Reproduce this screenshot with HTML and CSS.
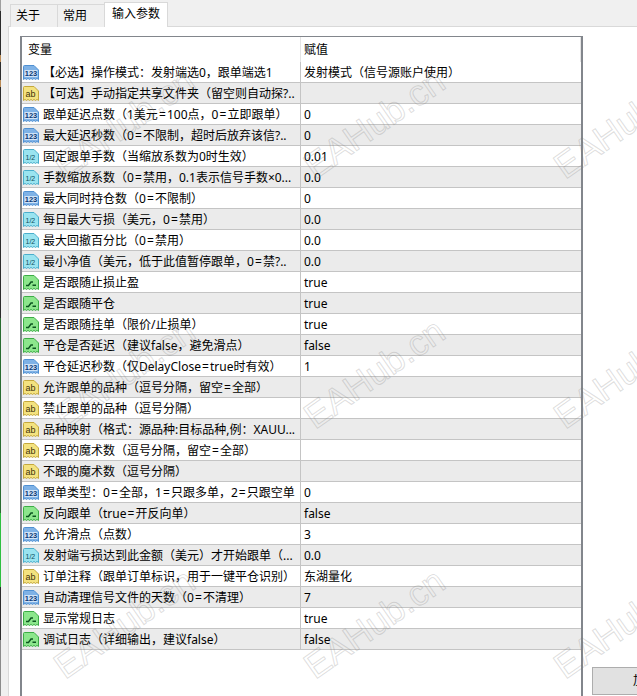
FILE: index.html
```html
<!DOCTYPE html>
<html lang="zh">
<head>
<meta charset="utf-8">
<title>输入参数</title>
<link rel="stylesheet" href="styles.css">
</head>
<body>
<svg class="defs" width="0" height="0" aria-hidden="true">
  <defs>
    <path id="page" d="M.5 1.5Q.5.5 1.5.5H11L15.5 5V14.5L14 13.4 12.5 14.5 11 13.4 9.5 14.5 8 13.4 6.5 14.5 5 13.4 3.5 14.5 2 13.4.5 14.5Z"/>
    <symbol id="i-int" viewBox="0 0 16 16"><use href="#page" fill="#7fb2e6" stroke="#4f90d2"/><path d="M1.5 5H14.5V12H1.5Z" fill="#cfe3f7"/><text x="8" y="11.2" class="ic-t ic-int">123</text></symbol>
    <symbol id="i-str" viewBox="0 0 16 16"><use href="#page" fill="#f4e27f" stroke="#c4a83c"/><text x="7.6" y="11.4" class="ic-t ic-str">ab</text></symbol>
    <symbol id="i-dbl" viewBox="0 0 16 16"><use href="#page" fill="#9ae4f0" stroke="#4aaecc"/><text x="7.4" y="11.2" class="ic-t ic-dbl">1/2</text></symbol>
    <symbol id="i-bool" viewBox="0 0 16 16"><use href="#page" fill="#8ce68c" stroke="#3cac46"/><path d="M3 10.5H5.5L8 7H10M9.5 10.2H13" fill="none" stroke="#0c5520" stroke-width="1.4"/></symbol>
  </defs>
</svg>
<div class="window">
  <div class="edge"></div>
  <div class="main">
    <nav class="tabs">
      <span class="tab">关于</span>
      <span class="tab">常用</span>
      <span class="tab active">输入参数</span>
    </nav>
    <section class="panel">
      <div class="frame">
        <table class="grid">
          <colgroup><col class="c-name"><col class="c-val"></colgroup>
          <thead><tr><th>变量</th><th>赋值</th></tr></thead>
          <tbody>
            <tr><td><svg class="ic"><use href="#i-int"/></svg>【必选】操作模式：发射端选0，跟单端选1</td><td>发射模式（信号源账户使用）</td></tr>
            <tr><td><svg class="ic"><use href="#i-str"/></svg>【可选】手动指定共享文件夹（留空则自动探?..</td><td></td></tr>
            <tr><td><svg class="ic"><use href="#i-int"/></svg>跟单延迟点数（1美元<span class="eq">=</span>100点，0<span class="eq">=</span>立即跟单）</td><td>0</td></tr>
            <tr><td><svg class="ic"><use href="#i-int"/></svg>最大延迟秒数（0<span class="eq">=</span>不限制，超时后放弃该信?..</td><td>0</td></tr>
            <tr><td><svg class="ic"><use href="#i-dbl"/></svg>固定跟单手数（当缩放系数为0时生效）</td><td>0.01</td></tr>
            <tr><td><svg class="ic"><use href="#i-dbl"/></svg>手数缩放系数（0<span class="eq">=</span>禁用，0.1表示信号手数×0...</td><td>0.0</td></tr>
            <tr><td><svg class="ic"><use href="#i-int"/></svg>最大同时持仓数（0<span class="eq">=</span>不限制）</td><td>0</td></tr>
            <tr><td><svg class="ic"><use href="#i-dbl"/></svg>每日最大亏损（美元，0<span class="eq">=</span>禁用）</td><td>0.0</td></tr>
            <tr><td><svg class="ic"><use href="#i-dbl"/></svg>最大回撤百分比（0<span class="eq">=</span>禁用）</td><td>0.0</td></tr>
            <tr><td><svg class="ic"><use href="#i-dbl"/></svg>最小净值（美元，低于此值暂停跟单，0<span class="eq">=</span>禁?..</td><td>0.0</td></tr>
            <tr><td><svg class="ic"><use href="#i-bool"/></svg>是否跟随止损止盈</td><td>true</td></tr>
            <tr><td><svg class="ic"><use href="#i-bool"/></svg>是否跟随平仓</td><td>true</td></tr>
            <tr><td><svg class="ic"><use href="#i-bool"/></svg>是否跟随挂单（限价/止损单）</td><td>true</td></tr>
            <tr><td><svg class="ic"><use href="#i-bool"/></svg>平仓是否延迟（建议false，避免滑点）</td><td>false</td></tr>
            <tr><td><svg class="ic"><use href="#i-int"/></svg>平仓延迟秒数（仅DelayClose<span class="eq">=</span>true时有效）</td><td>1</td></tr>
            <tr><td><svg class="ic"><use href="#i-str"/></svg>允许跟单的品种（逗号分隔，留空<span class="eq">=</span>全部）</td><td></td></tr>
            <tr><td><svg class="ic"><use href="#i-str"/></svg>禁止跟单的品种（逗号分隔）</td><td></td></tr>
            <tr><td><svg class="ic"><use href="#i-str"/></svg>品种映射（格式：源品种:目标品种,例：XAUU...</td><td></td></tr>
            <tr><td><svg class="ic"><use href="#i-str"/></svg>只跟的魔术数（逗号分隔，留空<span class="eq">=</span>全部）</td><td></td></tr>
            <tr><td><svg class="ic"><use href="#i-str"/></svg>不跟的魔术数（逗号分隔）</td><td></td></tr>
            <tr><td><svg class="ic"><use href="#i-int"/></svg>跟单类型：0<span class="eq">=</span>全部，1<span class="eq">=</span>只跟多单，2<span class="eq">=</span>只跟空单</td><td>0</td></tr>
            <tr><td><svg class="ic"><use href="#i-bool"/></svg>反向跟单（true<span class="eq">=</span>开反向单）</td><td>false</td></tr>
            <tr><td><svg class="ic"><use href="#i-int"/></svg>允许滑点（点数）</td><td>3</td></tr>
            <tr><td><svg class="ic"><use href="#i-dbl"/></svg>发射端亏损达到此金额（美元）才开始跟单（...</td><td>0.0</td></tr>
            <tr><td><svg class="ic"><use href="#i-str"/></svg>订单注释（跟单订单标识，用于一键平仓识别）</td><td>东湖量化</td></tr>
            <tr><td><svg class="ic"><use href="#i-int"/></svg>自动清理信号文件的天数（0<span class="eq">=</span>不清理）</td><td>7</td></tr>
            <tr><td><svg class="ic"><use href="#i-bool"/></svg>显示常规日志</td><td>true</td></tr>
            <tr><td><svg class="ic"><use href="#i-bool"/></svg>调试日志（详细输出，建议false）</td><td>false</td></tr>
          </tbody>
        </table>
      </div>
      <div class="side"><button class="btn" type="button">加载</button></div>
    </section>
  </div>
</div>
<div class="marks" aria-hidden="true">
  <span class="mark">EAHub.cn</span><span class="mark">EAHub.cn</span><span class="mark">EAHub.cn</span>
  <span class="mark">EAHub.cn</span><span class="mark">EAHub.cn</span><span class="mark">EAHub.cn</span>
  <span class="mark">EAHub.cn</span><span class="mark">EAHub.cn</span><span class="mark">EAHub.cn</span>
</div>
</body>
</html>
```
FILE: styles.css
```css
* { box-sizing: border-box; }
html, body { margin: 0; height: 100%; overflow: hidden; }
body {
  background: #f0f0f0;
  color: #000;
  font: 12px/1 "Noto Sans", "Noto Sans CJK SC", sans-serif;
  position: relative;
}
.defs { position: absolute; }
.window { display: flex; height: 696px; }
.edge {
  width: 1px;
  flex: none;
  background: linear-gradient(#a0a0a0 0 11px, #2c2c2c 11px 55px, #b98a55 55px 62px, #2c2c2c 62px 80px, #b98a55 80px 87px, #2c2c2c 87px 318px, #2a6d30 318px 513px, #2fc040 513px 587px, #2c2c2c 587px 640px, #8c8c8c 640px);
}
.main { flex: 1; min-width: 0; display: flex; flex-direction: column; padding-left: 7px; }
.tabs { height: 27px; display: flex; align-items: flex-end; padding-left: 2px; border-bottom: 1px solid #d9d9d9; flex: none; }
.tab {
  height: 23px;
  width: 48px;
  margin: 0 -1px -1px 0;
  padding: 5px 0 0 5px;
  background: #f0f0f0;
  border: 1px solid #d9d9d9;
  border-bottom: 0;
}
.tab.active {
  position: relative;
  height: 25px;
  width: 64px;
  background: #fff;
  padding: 5px 0 0 7px;
}
.panel { flex: 1; min-height: 0; display: flex; background: #fff; border-left: 1px solid #d9d9d9; padding: 9px 0 0 11px; }
.frame { width: 563px; flex: none; border: solid #82868c; border-width: 1px 2px 0; background: #fff; }
.grid { width: 559px; border-collapse: separate; border-spacing: 0; table-layout: fixed; }
.c-name { width: 279px; }
.c-val { width: 280px; }
th, td { padding: 0; text-align: left; font-weight: 400; white-space: nowrap; overflow: hidden; }
th { height: 25px; padding-left: 6px; border-right: 1px solid #e4e4e4; }
th + th { padding-left: 3px; }
td { height: 21px; padding-top: 1px; line-height: 19px; vertical-align: top; border-bottom: 1px solid #c4c4c4; }
td:first-child { border-right: 1px solid #c4c4c4; }
td + td { padding-left: 3px; }
tbody tr:nth-child(even) td { background: #ebebeb; }
.eq { padding: 0 1.1px; }
.ic { width: 16px; height: 16px; margin: 2px 4px 0 1px; vertical-align: top; }
.ic-t { font: 700 7.5px "Liberation Sans", sans-serif; text-anchor: middle; }
.ic-int { fill: #0c3874; }
.ic-str { font-size: 9px; font-weight: 400; fill: #3f3308; }
.ic-dbl { font-weight: 400; font-size: 7px; fill: #0c4f60; }
.side { flex: 1; min-width: 0; display: flex; align-items: flex-end; padding: 0 0 1px 9px; overflow: hidden; }
.btn {
  flex: none;
  width: 106px;
  height: 28px;
  background: #e1e1e1;
  border: 1px solid #adadad;
  font: inherit;
  color: #000;
  padding: 0;
}
.marks {
  position: absolute;
  left: 0;
  top: 0;
  width: 750px;
  height: 750px;
  display: grid;
  grid-template-columns: repeat(3, 250px);
  grid-auto-rows: 250px;
  pointer-events: none;
}
.mark {
  align-self: start;
  justify-self: start;
  margin: 150px 0 0 65px;
  font: 36px/1 "Liberation Sans", sans-serif;
  color: transparent;
  -webkit-text-stroke: 1px rgba(120, 120, 120, 0.25);
  transform: rotate(-35deg);
  transform-origin: 0 30px;
  white-space: nowrap;
}
```
